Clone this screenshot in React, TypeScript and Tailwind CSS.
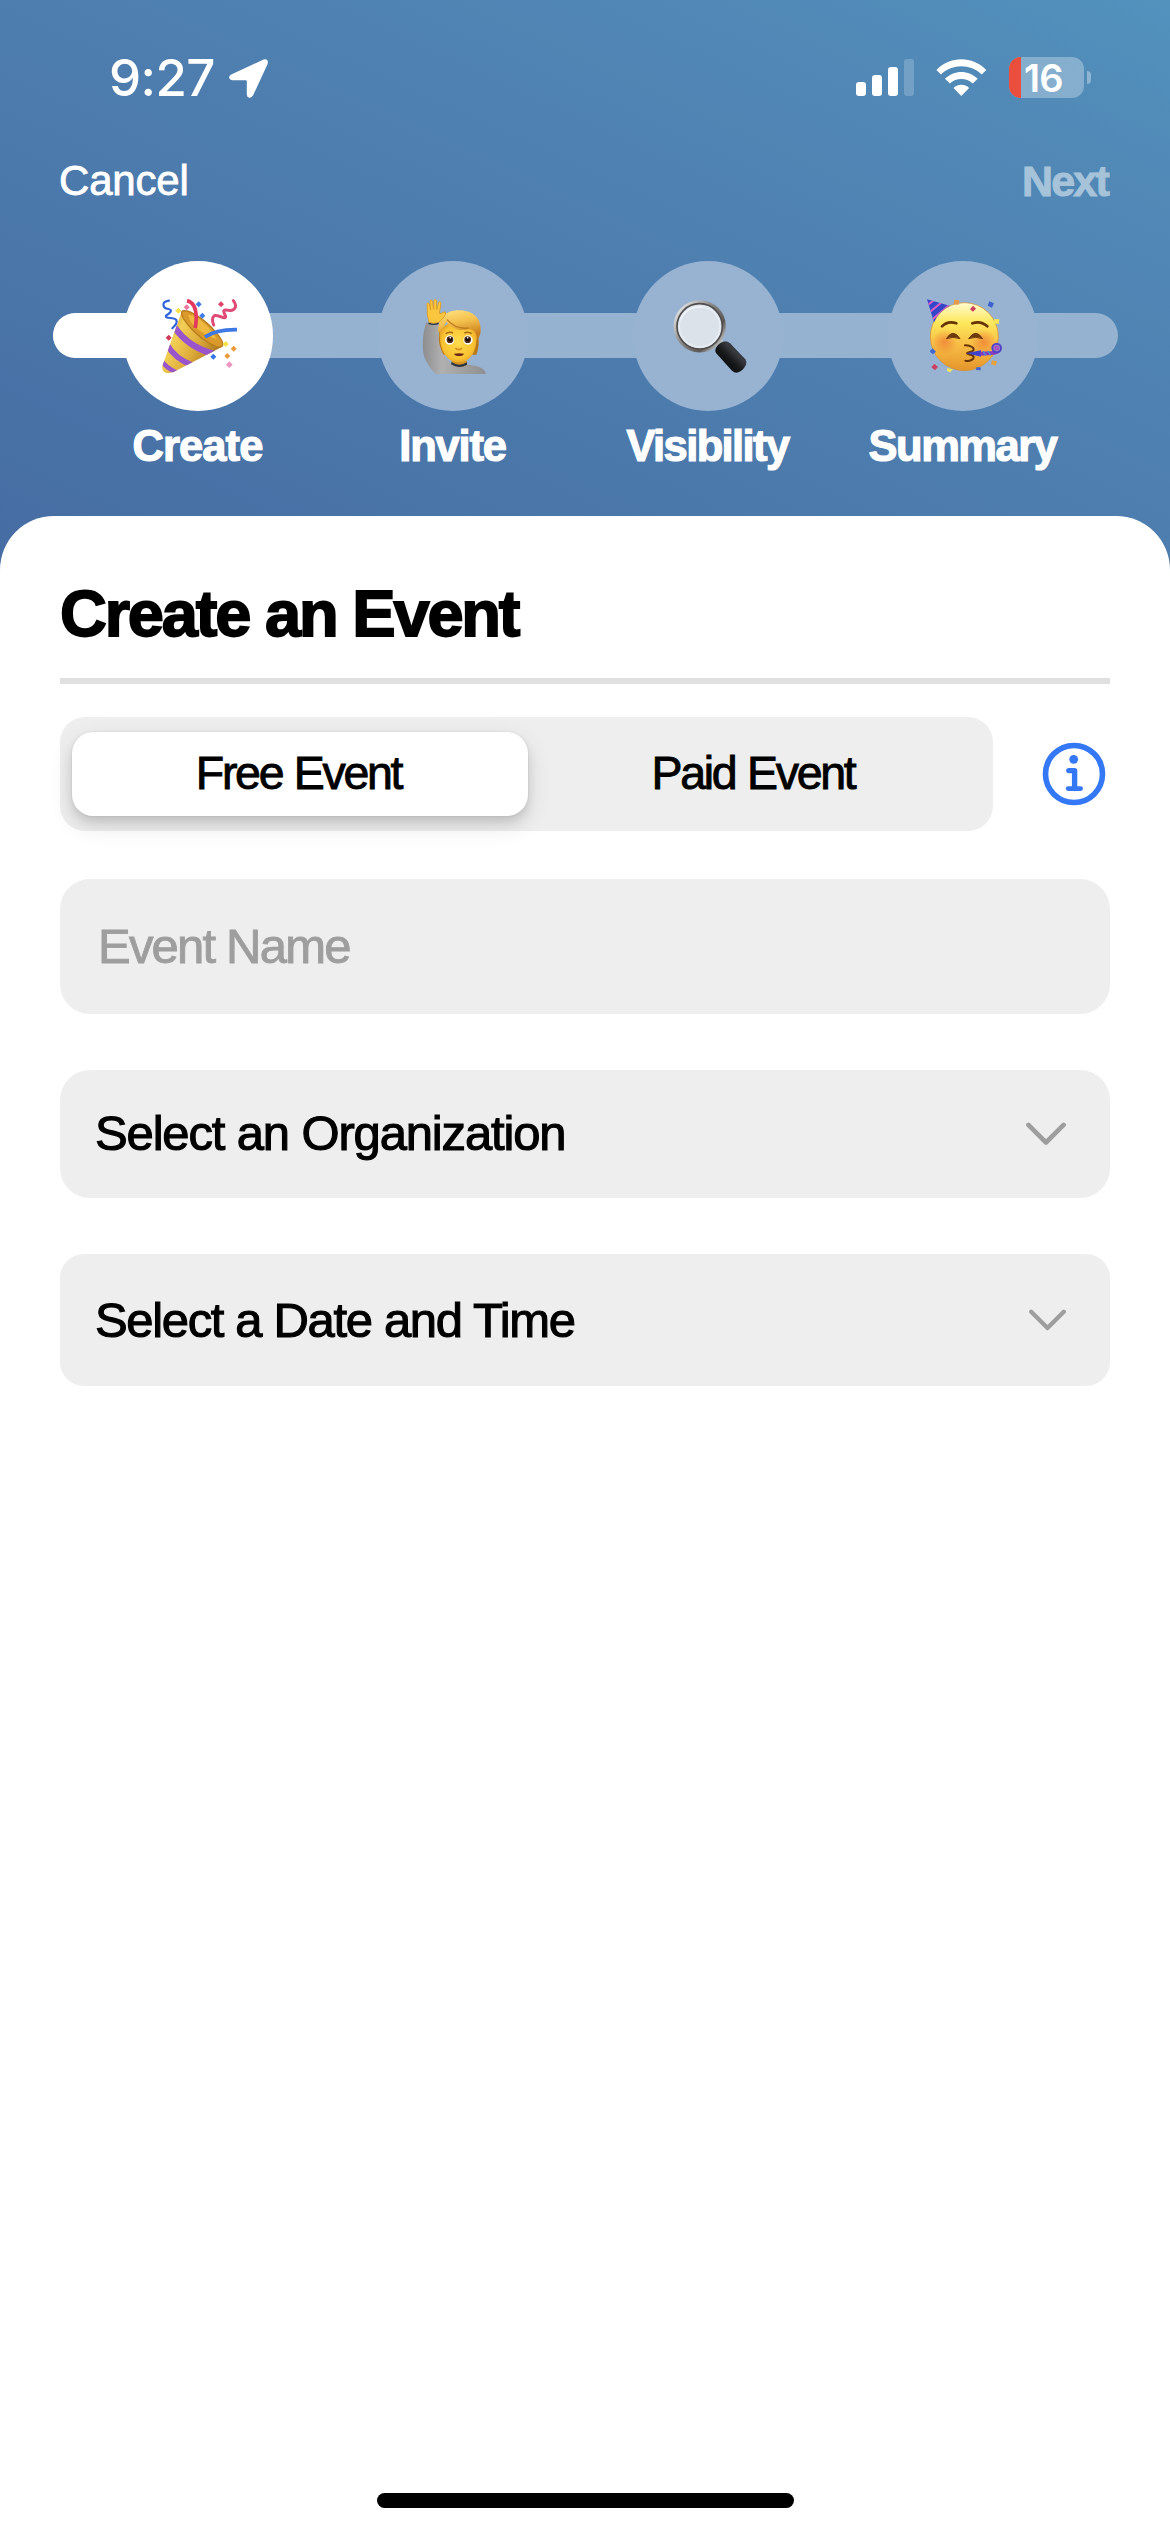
import React from "react";

type StepProps = {
  label: string;
  labelClass: string;
  circleClass: string;
  children: React.ReactNode;
};

function PartyPopper() {
  return (
    <svg viewBox="363 145 225 225" className="ml-[3px] size-[75px]">
      <defs>
        <linearGradient id="cone" x1="0" y1="0" x2="1" y2="0.6">
          <stop offset="0" stopColor="#c48a2a" />
          <stop offset="0.35" stopColor="#f3cf55" />
          <stop offset="0.65" stopColor="#dfae3c" />
          <stop offset="1" stopColor="#a8741f" />
        </linearGradient>
        <clipPath id="coneClip">
          <path d="M422 183 L364 346 Q361 366 382 368 L398 364 L541 290 Q500 270 422 183 Z" />
        </clipPath>
      </defs>
      <path d="M422 183 L364 346 Q361 366 382 368 L398 364 L541 290 Q500 270 422 183 Z" fill="url(#cone)" />
      <g clipPath="url(#coneClip)" stroke="#9a55cc" fill="none">
        <path d="M398 226 Q440 290 520 310" strokeWidth="19" />
        <path d="M378 282 Q402 325 455 344" strokeWidth="17" />
        <path d="M360 328 Q375 352 408 366" strokeWidth="13" />
      </g>
      <path d="M424 181 C445 175 490 205 525 245 C545 268 550 284 541 288 C525 294 488 270 460 243 C434 217 414 189 424 181 Z" fill="#d99a2b" stroke="#b97c1d" strokeWidth="4" />
      <path d="M441 192 C470 195 505 225 527 265 C505 262 470 240 450 215 Z" fill="#efb93f" />
      <path d="M438 150 Q474 158 463 232" fill="none" stroke="#e3395f" strokeWidth="11" />
      <path d="M492 259 Q525 236 588 237" fill="none" stroke="#3e78e4" strokeWidth="11" />
      <path d="M384 150 C360 153 364 172 382 175 C398 178 386 188 375 195 C372 206 398 198 406 208 C411 217 402 225 394 233" fill="none" stroke="#2f64dc" strokeWidth="6.5" strokeLinecap="round" />
      <path d="M577 150 C590 166 582 182 563 179 C543 174 547 184 554 197 C555 209 531 191 520 195 C510 203 515 215 518 223" fill="none" stroke="#df4a76" strokeWidth="9" strokeLinecap="round" />
      <g>
        <path d="M473 152l9 9-9 9-9-9z" fill="#3f7ceb" />
        <path d="M484 186l9 9-9 9-9-9z" fill="#3f7ceb" />
        <path d="M517 309l9 9-9 9-9-9z" fill="#3474e6" />
        <path d="M412 171l9 9-9 9-9-9z" fill="#f3e04b" />
        <path d="M554 271l9 9-9 9-9-9z" fill="#f5e243" />
        <path d="M437 161l9 9-9 9-9-9z" fill="#e878a2" />
        <path d="M565 332l10 10-10 10-10-10z" fill="#ee95bf" />
        <path d="M540 152l9 9-9 9-9-9z" fill="#dd4469" />
        <path d="M383 252l9 9-9 9-9-9z" fill="#cf3858" />
        <path d="M578 285l9 9-9 9-9-9z" fill="#ec9b3a" />
        <path d="M559 307l9 9-9 9-9-9z" fill="#ec9b3a" />
      </g>
    </svg>
  );
}

function RaisingHand() {
  return (
    <svg viewBox="136 145 225 225" className="ml-[3px] size-[75px]">
      <defs>
        <radialGradient id="face" cx="0.5" cy="0.5" r="0.6">
          <stop offset="0" stopColor="#ffdc4e" />
          <stop offset="0.7" stopColor="#f9c232" />
          <stop offset="1" stopColor="#dc9320" />
        </radialGradient>
        <linearGradient id="hair" x1="0" y1="0" x2="0.3" y2="1">
          <stop offset="0" stopColor="#ffe384" />
          <stop offset="0.5" stopColor="#f4c04c" />
          <stop offset="1" stopColor="#c97f1d" />
        </linearGradient>
        <linearGradient id="sleeve" x1="0" y1="0" x2="1" y2="0">
          <stop offset="0" stopColor="#8d8d8f" />
          <stop offset="0.3" stopColor="#b0b0b1" />
          <stop offset="1" stopColor="#8f8f91" />
        </linearGradient>
      </defs>
      <path d="M203 240 C196 285 203 305 209 312 L314 312 C323 290 324 260 314 230 Z" fill="#b97818" />
      <path d="M240 330 L286 330 L286 350 L240 350 Z" fill="#d6951f" />
      <path d="M164 214 C153 245 150 290 157 316 C163 335 180 358 192 370 L343 370 C340 350 312 343 286 342 C270 352 248 349 238 338 C216 322 203 290 201 265 L200 220 C188 224 174 222 164 214 Z" fill="url(#sleeve)" />
      <path d="M240 334 Q262 350 286 335 L286 342 Q262 356 238 341 Z" fill="#2a3545" />
      <path d="M171 215 Q185 222 201 215 L201 221 Q185 226 170 220 Z" fill="#263246" />
      <path d="M204 240 C202 282 215 334 261 334 C307 334 318 284 315 240 C300 205 225 205 204 240 Z" fill="url(#face)" />
      <path d="M200 246 C197 204 222 179 261 179 C308 179 329 206 327 242 C326 254 322 261 317 265 C314 245 307 233 290 236 C262 243 236 231 225 213 C218 224 210 240 200 246 Z" fill="url(#hair)" />
      <path d="M226 207 C245 228 270 235 291 232" fill="none" stroke="#bd7b1b" strokeWidth="4" />
      <path d="M172 215 C170 202 165 190 167 180 L166 159 Q168 153 173 160 L177 178 L175 151 Q178 144 182 151 L186 176 L187 149 Q190 142 195 149 L195 177 L201 155 Q206 149 208 158 L203 188 C211 190 213 183 221 184 C226 191 211 207 201 215 Q186 220 172 215 Z" fill="#f9c63d" stroke="#dc9923" strokeWidth="2.5" />
      <path d="M222 249 Q233 241 244 247 M278 247 Q290 241 300 249" fill="none" stroke="#a66916" strokeWidth="4.5" />
      <circle cx="234" cy="268" r="14" fill="#fff" />
      <circle cx="289" cy="268" r="14" fill="#fff" />
      <circle cx="235" cy="267" r="10" fill="#4f2b13" />
      <circle cx="288" cy="267" r="10" fill="#4f2b13" />
      <circle cx="235" cy="266" r="6" fill="#130a08" />
      <circle cx="288" cy="266" r="6" fill="#130a08" />
      <circle cx="236" cy="261" r="2.5" fill="#fff" />
      <circle cx="288" cy="261" r="2.5" fill="#fff" />
      <path d="M251 292 Q261 302 271 292" fill="none" stroke="#d58d1f" strokeWidth="5" />
      <path d="M247 309 Q262 306 277 309 Q275 316 262 316 Q249 316 247 309 Z" fill="#6b2818" />
    </svg>
  );
}

function MagnifyingGlass() {
  return (
    <svg viewBox="212 145 225 225" className="ml-[3px] size-[75px]">
      <defs>
        <linearGradient id="ring" x1="0" y1="0" x2="1" y2="0.8">
          <stop offset="0" stopColor="#f7f7f7" />
          <stop offset="0.45" stopColor="#8f8f8f" />
          <stop offset="0.8" stopColor="#5c5856" />
          <stop offset="1" stopColor="#c8c8c8" />
        </linearGradient>
        <linearGradient id="handle" x1="0" y1="1" x2="1" y2="0">
          <stop offset="0" stopColor="#000" />
          <stop offset="0.45" stopColor="#17181a" />
          <stop offset="0.65" stopColor="#3a3b40" />
          <stop offset="1" stopColor="#111" />
        </linearGradient>
      </defs>
      <path d="M340 272 L360 262 L368 278 L350 293 Z" fill="#c2c5c8" />
      <circle cx="295" cy="227" r="73" fill="none" stroke="url(#ring)" strokeWidth="11" />
      <circle cx="295" cy="227" r="68" fill="#dbe3ec" stroke="#504d4c" strokeWidth="5" />
      <circle cx="295" cy="228" r="61" fill="#dbe2ea" stroke="#e7edf3" strokeWidth="5" />
      <path d="M238 205 Q258 165 305 170" fill="none" stroke="#f2f5f9" strokeWidth="4" />
      <path d="M344 291 Q355 273 373 272 Q380 273 386 278 L432 326 Q437 333 434 342 Q425 362 406 366 Q398 366 392 360 L346 309 Q339 301 344 291 Z" fill="url(#handle)" />
    </svg>
  );
}

function PartyingFace() {
  return (
    <svg viewBox="228 143 225 225" className="ml-[3px] size-[75px]">
      <defs>
        <linearGradient id="ball" x1="0" y1="0" x2="0" y2="1">
          <stop offset="0" stopColor="#fffbd0" />
          <stop offset="0.3" stopColor="#fde75a" />
          <stop offset="0.62" stopColor="#f7bd45" />
          <stop offset="1" stopColor="#e5952b" />
        </linearGradient>
        <radialGradient id="blush">
          <stop offset="0" stopColor="#ef7b35" stopOpacity="0.75" />
          <stop offset="1" stopColor="#ef7b35" stopOpacity="0" />
        </radialGradient>
        <clipPath id="hatClip">
          <path d="M228 144 L296 163 Q262 180 249 213 Z" />
        </clipPath>
      </defs>
      <circle cx="340" cy="256" r="102" fill="url(#ball)" stroke="#d98f2b" strokeWidth="2" />
      <circle cx="281" cy="272" r="38" fill="url(#blush)" />
      <circle cx="398" cy="272" r="38" fill="url(#blush)" />
      <path d="M228 144 L296 163 Q262 180 249 213 Z" fill="#3447c9" />
      <g clipPath="url(#hatClip)" stroke="#e05fc2" strokeWidth="6">
        <path d="M226 164 L252 144 M232 186 L276 150 M239 208 L296 160" />
      </g>
      <path d="M273 225 Q291 207 316 216 M364 216 Q389 207 409 225" fill="none" stroke="#663404" strokeWidth="8" strokeLinecap="round" />
      <path d="M286 262 Q306 230 327 262 Q306 254 286 262 Z M353 262 Q374 230 395 262 Q374 254 353 262 Z" fill="#6d3908" stroke="#6d3908" strokeWidth="3" />
      <path d="M342 282 C358 281 374 291 366 298 C360 304 348 302 348 306 C348 311 362 308 367 315 C372 324 355 331 343 328" fill="none" stroke="#673507" strokeWidth="6" strokeLinecap="round" />
      <path d="M346 306 L390 297 L390 316 Z" fill="#3d43cc" />
      <path d="M388 301 L420 300 Q434 300 442 292 L450 298 Q440 311 420 311 L388 313 Z" fill="#863bbd" />
      <path d="M396 299l8 13 M411 299l8 13" stroke="#3f8fe0" strokeWidth="4" />
      <circle cx="437" cy="290" r="13" fill="#9b86c8" stroke="#5342c7" strokeWidth="6" />
      <circle cx="437" cy="290" r="5" fill="none" stroke="#b13ab6" strokeWidth="4" />
      <path d="M310 145l15 2-3 14-14-3z" fill="#e69b48" />
      <path d="M366 163l9 9-9 9-9-7z" fill="#cf3f5d" />
      <path d="M415 150l14 6-6 13-13-6z" fill="#3d62ce" />
      <path d="M430 203l15 1-2 14-14-2z" fill="#f6e752" />
      <path d="M245 291l10 10-10 8-9-9z" fill="#3f65d0" />
      <path d="M250 337l11 10-9 10-11-9z" fill="#c94164" />
      <path d="M289 350l17 4-9 9-9-5z" fill="#f3e855" />
      <path d="M376 348l13 0 0 9-14-1z" fill="#3f62cf" />
      <path d="M423 327l15 3-4 13-14-4z" fill="#e9a03d" />
    </svg>
  );
}

function Step({ label, labelClass, circleClass, children }: StepProps) {
  return (
    <div className="relative flex w-[255px] flex-col items-center">
      <div className={"flex size-[150px] items-center justify-center rounded-full " + circleClass}>{children}</div>
      <span className={"mt-[10px] text-[43.5px] leading-[50px] font-bold whitespace-nowrap [-webkit-text-stroke:1.2px_white] " + labelClass}>
        {label}
      </span>
    </div>
  );
}

function StatusBar() {
  return (
    <div className="flex h-[156px] items-start justify-between pr-[79px] pl-[109px] font-['Inter']">
      <div className="flex pt-[48px]">
        <span className="w-[120px] text-[51px] leading-[60px] font-medium tracking-[-0.6px]">9:27</span>
        <svg viewBox="0 0 39 39" className="mt-[11px] size-[39px]" fill="white">
          <path d="M2.2 15.6 L34.6 0.5 Q39.8 -0.6 38.6 5 L24 36.6 Q22.7 39 20.4 38.7 Q17.9 38.3 17.8 35.6 V22.2 Q17.8 21.2 16.8 21.2 H3.3 Q0.6 21 0.1 18.7 Q-0.1 16.6 2.2 15.6 Z" />
        </svg>
      </div>
      <div className="flex items-start pt-[57px]">
        <div className="mt-[2px] flex h-[37px] w-[58px] items-end justify-between">
          <div className="h-[14px] w-[10px] rounded-[3px] bg-white" />
          <div className="h-[21px] w-[10px] rounded-[3px] bg-white" />
          <div className="h-[29px] w-[10px] rounded-[3px] bg-white" />
          <div className="h-[37px] w-[10px] rounded-[3px] bg-white/20" />
        </div>
        <svg viewBox="409 86 152 112" className="mt-[2px] ml-[22px] h-[37px] w-[51px]" fill="white">
          <path d="M409 119 C450 76 519 76 560 119 L546 133 C512 100 457 100 423 133 Z" />
          <path d="M435 146 C462 118 507 118 534 146 L519 160 C500 142 469 142 450 160 Z" />
          <path d="M461 174 C474 161 495 161 508 174 L484.500 198 Z" />
        </svg>
        <div className="ml-[22px] flex h-[41px] w-[75px] rounded-[12px] bg-white/30">
          <div className="w-[12px] rounded-l-[12px] bg-[#eb4e3d]" />
          <span className="-mt-[2px] pl-[3px] text-[38px] leading-[46px] font-semibold tracking-[-0.8px]">16</span>
        </div>
        <div className="mt-[14px] ml-[3px] h-[13px] w-[4px] rounded-r-[5px] bg-white/35" />
      </div>
    </div>
  );
}

function Header() {
  return (
    <header className="h-[516px] text-white">
      <StatusBar />
      <nav className="flex h-[105px] items-start justify-between pr-[62px] pl-[59px]">
        <span className="pt-px text-[42px] leading-[48px] tracking-[-0.2px] [-webkit-text-stroke:0.8px_white]">Cancel</span>
        <span className="pt-px text-[43px] leading-[48px] font-bold tracking-[-1.8px] text-[#a6c3da] [-webkit-text-stroke:1px_#a6c3da]">Next</span>
      </nav>
      <div className="relative flex pl-[70px]">
        <div className="absolute top-[52px] right-[52px] left-[53px] h-[45px] overflow-hidden rounded-full bg-[#96b2d1]">
          <div className="h-full w-[140px] bg-white" />
        </div>
        <Step label="Create" labelClass="tracking-[-0.9px]" circleClass="bg-white"><PartyPopper /></Step>
        <Step label="Invite" labelClass="tracking-[-1.2px]" circleClass="bg-[#98b3d2]"><RaisingHand /></Step>
        <Step label="Visibility" labelClass="tracking-[-1.6px]" circleClass="bg-[#98b3d2]"><MagnifyingGlass /></Step>
        <Step label="Summary" labelClass="tracking-[-1.5px]" circleClass="bg-[#98b3d2]"><PartyingFace /></Step>
      </div>
    </header>
  );
}

function EventTypeRow() {
  return (
    <div className="mt-[33px] flex items-center justify-between">
      <div className="flex h-[114px] w-[933px] items-center rounded-[25px] bg-[#eeeeee] pl-[12px] text-[46.5px] tracking-[-2.3px] [-webkit-text-stroke:0.9px_black] [word-spacing:1px]">
        <div className="flex h-[84px] w-[456px] items-center justify-center rounded-[21px] bg-white pr-[3px] shadow-[0_9px_24px_rgba(0,0,0,0.12),0_6px_10px_rgba(0,0,0,0.1),0_0_2px_rgba(0,0,0,0.12)]">
          Free Event
        </div>
        <div className="flex h-[84px] w-[450px] items-center justify-center">Paid Event</div>
      </div>
      <svg viewBox="0 0 64 64" className="mr-[4px] size-[64px]" fill="none" stroke="#3478f6">
        <circle cx="32" cy="32" r="28.5" strokeWidth="5.6" />
        <circle cx="31.7" cy="17.3" r="4.4" fill="#3478f6" stroke="none" />
        <path d="M26.8 28.6 H32.6 V46.5" strokeWidth="5.4" strokeLinecap="round" strokeLinejoin="round" />
        <path d="M26.2 46.6 H38.6" strokeWidth="4.8" strokeLinecap="round" />
      </svg>
    </div>
  );
}

export default function App() {
  return (
    <div className="flex h-[2532px] w-[1170px] flex-col overflow-hidden bg-[linear-gradient(204.8deg,#5292bd_0%,#5189b7_6%,#4d7dae_18%,#466da3_36%)] font-['Liberation_Sans',sans-serif]">
      <Header />
      <main className="flex flex-1 flex-col rounded-t-[54px] bg-white px-[60px] text-black">
        <h1 className="mt-[60px] h-[102px] text-[65px] leading-[76px] font-bold tracking-[-2.2px] [-webkit-text-stroke:1.8px_black]">
          Create an Event
        </h1>
        <div className="h-[6px] shrink-0 bg-[#e0e0e0]" />
        <EventTypeRow />
        <div className="mt-[48px] flex h-[135px] items-center rounded-[30px] bg-[#eeeeee] pl-[38px] text-[49px] tracking-[-1.8px] text-[#9e9e9e] [-webkit-text-stroke:0.9px_#9e9e9e]">
          Event Name
        </div>
        <div className="mt-[56px] flex h-[128px] items-center justify-between rounded-[30px] bg-[#eeeeee] pr-[44px] pl-[35px]">
          <span className="text-[49px] tracking-[-1.15px] [-webkit-text-stroke:1.1px_black]">Select an Organization</span>
          <svg viewBox="0 0 40 24" className="h-[24px] w-[40px]" fill="none" stroke="#9e9e9e" strokeWidth="4.6" strokeLinecap="round" strokeLinejoin="round">
            <path d="M2.4 2.9 L20 20.5 L37.6 2.9" />
          </svg>
        </div>
        <div className="mt-[56px] flex h-[132px] items-center justify-between rounded-[24px] bg-[#eeeeee] pr-[44px] pl-[35px]">
          <span className="pt-px text-[49px] tracking-[-1.35px] [-webkit-text-stroke:1.1px_black]">Select a Date and Time</span>
          <svg viewBox="0 0 37 22" className="h-[22px] w-[37px]" fill="none" stroke="#9e9e9e" strokeWidth="4.3" strokeLinecap="round" strokeLinejoin="round">
            <path d="M2.2 2.8 L18.5 19.1 L34.8 2.8" />
          </svg>
        </div>
        <div className="mt-auto mb-[24px] h-[15px] w-[417px] self-center rounded-full bg-black" />
      </main>
    </div>
  );
}
